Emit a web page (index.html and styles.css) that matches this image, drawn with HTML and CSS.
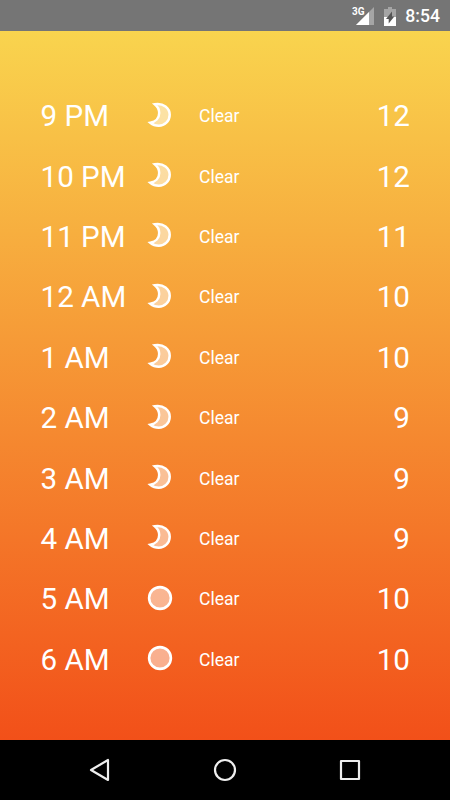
FILE: index.html
```html
<!DOCTYPE html>
<html lang="en">
<head>
<meta charset="utf-8">
<title>Hourly forecast</title>
<link rel="stylesheet" href="styles.css">
</head>
<body>
<svg class="defs" width="0" height="0" aria-hidden="true">
  <symbol id="moon" viewBox="0 0 26 26"><path d="M7.800 2.200C16.500 .7 22.700 6.200 22.700 12.700C22.700 19.200 17.500 23.700 11.800 23.700C8.500 23.700 5.700 22.700 3.300 20.700C8.500 19.800 12.200 16.200 12.200 11C12.200 7.300 10.500 4.400 7.800 2.200Z" fill="#fff" fill-opacity=".5" stroke="#fff" stroke-width="2.5" stroke-linejoin="miter"/></symbol>
  <symbol id="sun" viewBox="0 0 26 26"><circle cx="13" cy="13" r="10.9" fill="#fff" fill-opacity=".5" stroke="#fff" stroke-width="2.6"/></symbol>
</svg>
<header class="status">
  <svg class="signal" width="18" height="18" viewBox="0 0 18 18"><path d="M18 0V18H0Z" fill="#a5a5a5"/><path d="M13 5V18H0Z" fill="#fff"/></svg>
  <span class="network">3G</span>
  <svg class="battery" width="12" height="19" viewBox="0 0 12 19"><path d="M4 0H8V2H12V10H0V2H4Z" fill="#a5a5a5"/><path d="M0 10H12V19H0Z" fill="#fff"/><path d="M8 4.500V9.500H10.300L4.700 16.500V12H2Z" fill="#555"/></svg>
  <span class="clock">8:54</span>
</header>
<main class="forecast">
  <ul class="hours">
    <li class="hour"><span class="time">9 PM</span><svg class="icon"><use href="#moon"/></svg><span class="summary">Clear</span><span class="temp">12</span></li>
    <li class="hour"><span class="time">10 PM</span><svg class="icon"><use href="#moon"/></svg><span class="summary">Clear</span><span class="temp">12</span></li>
    <li class="hour"><span class="time">11 PM</span><svg class="icon"><use href="#moon"/></svg><span class="summary">Clear</span><span class="temp">11</span></li>
    <li class="hour"><span class="time">12 AM</span><svg class="icon"><use href="#moon"/></svg><span class="summary">Clear</span><span class="temp">10</span></li>
    <li class="hour"><span class="time">1 AM</span><svg class="icon"><use href="#moon"/></svg><span class="summary">Clear</span><span class="temp">10</span></li>
    <li class="hour"><span class="time">2 AM</span><svg class="icon"><use href="#moon"/></svg><span class="summary">Clear</span><span class="temp">9</span></li>
    <li class="hour"><span class="time">3 AM</span><svg class="icon"><use href="#moon"/></svg><span class="summary">Clear</span><span class="temp">9</span></li>
    <li class="hour"><span class="time">4 AM</span><svg class="icon"><use href="#moon"/></svg><span class="summary">Clear</span><span class="temp">9</span></li>
    <li class="hour"><span class="time">5 AM</span><svg class="icon"><use href="#sun"/></svg><span class="summary">Clear</span><span class="temp">10</span></li>
    <li class="hour"><span class="time">6 AM</span><svg class="icon"><use href="#sun"/></svg><span class="summary">Clear</span><span class="temp">10</span></li>
  </ul>
</main>
<nav class="navbar">
  <svg width="24" height="26" viewBox="0 0 24 26"><path d="M20 3V23L3 13Z"/></svg>
  <svg width="24" height="26" viewBox="0 0 24 26"><circle cx="12" cy="13" r="10"/></svg>
  <svg width="24" height="26" viewBox="0 0 24 26"><path d="M3 4H21V22H3Z"/></svg>
</nav>
</body>
</html>
```

FILE: styles.css
```css
* { box-sizing: border-box; }
body { margin: 0; width: 450px; height: 800px; display: flex; flex-direction: column; overflow: hidden; font-family: Roboto, sans-serif; color: #fff; }
.defs { display: none; }
.status { height: 31px; background: #757575; display: flex; align-items: center; justify-content: flex-end; padding: 1px 10px 0 0; position: relative; }
.network { position: absolute; left: 352px; top: 6px; font-size: 10px; font-weight: 700; line-height: 12px; }
.battery { margin: 0 9px 0 10.5px; }
.clock { font-size: 17.6px; font-weight: 500; }
.forecast { height: 709px; background: linear-gradient(#f9d44e, #f25019); padding: 55px 40px 0; }
.hours { list-style: none; margin: 0; padding: 0; }
.hour { height: 60.4px; display: grid; grid-template-columns: 107px 52px 1fr auto; align-items: center; }
.time, .temp { font-size: 29.6px; }
.time { padding-left: 0.5px; }
.icon { width: 26px; height: 26px; margin-bottom: 3px; }
.summary { font-size: 17.5px; }
.navbar { height: 60px; background: #000; display: flex; justify-content: center; align-items: center; gap: 101px; }
.navbar svg { fill: none; stroke: #eee; stroke-width: 2.2; stroke-linejoin: round; }
```
